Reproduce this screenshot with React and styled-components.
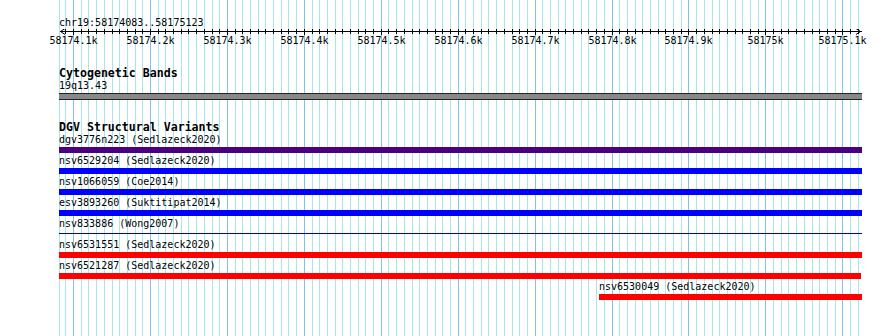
import React from "react";
import styled, { createGlobalStyle } from "styled-components";

const VIEW_START = 58174083;
const VIEW_END = 58175123;
const ORIGIN = 60;
const PX_PER_BP = 800 / (VIEW_END - VIEW_START);
const bpToX = (bp) => ORIGIN + (bp - VIEW_START) * PX_PER_BP;

const GlobalStyle = createGlobalStyle`
  html, body {
    margin: 0;
    padding: 0;
    background: #fff;
  }
  body {
    font-family: "DejaVu Sans Mono", "Liberation Mono", monospace;
    color: #000;
  }
`;

const Browser = styled.div`
  position: relative;
  width: 890px;
  height: 336px;
  overflow: hidden;
  background: #fff;
`;

const GridLayer = styled.svg`
  position: absolute;
  left: 0;
  top: 0;
  z-index: 0;
`;

const Content = styled.div`
  position: relative;
  z-index: 1;
`;

const Location = styled.div`
  padding: 17px 0 0 59px;
  font-size: 10px;
  line-height: 12px;
  height: 12px;
`;

const RulerSvg = styled.svg`
  display: block;
  text {
    font-family: "DejaVu Sans Mono", "Liberation Mono", monospace;
    font-size: 10px;
  }
`;

const Track = styled.section`
  padding-left: 59px;
  margin-top: ${(p) => p.$top}px;
`;

const TrackTitle = styled.div`
  font-size: 11.6px;
  font-weight: bold;
  line-height: 13px;
  height: 13px;
  white-space: pre;
`;

const Label = styled.div`
  font-size: 10px;
  line-height: 12px;
  height: 12px;
  white-space: pre;
`;

const BandBar = styled.div`
  margin-top: 1px;
  width: 803px;
  height: 5px;
  background: #888;
  border-top: 1px solid #222;
  border-bottom: 1px solid #222;
`;

const Feature = styled.div`
  display: flex;
  flex-direction: column;
`;

const Bar = styled.div`
  height: ${(p) => (p.$thin ? 1 : 6)}px;
  margin: ${(p) => (p.$thin ? "3px 0 5px" : "1px 0 2px")};
  background: ${(p) => p.$color};
`;

function ticks() {
  const list = [];
  for (let bp = 58174090; bp <= 58175120; bp += 10) {
    list.push({ bp, x: Math.round(bpToX(bp)), major: bp % 100 === 0 });
  }
  return list;
}

function Grid() {
  const t = ticks();
  return (
    <GridLayer width="890" height="336" shapeRendering="crispEdges">
      <rect x="59" y="0" width="1" height="336" fill="#a8e6ee" />
      {t.map((k) => (
        <rect
          key={k.bp}
          x={k.x}
          y="0"
          width="1"
          height="336"
          fill={k.major ? "#7fc3ea" : "#a8e6ee"}
        />
      ))}
    </GridLayer>
  );
}

function Ruler() {
  const t = ticks();
  return (
    <RulerSvg width="890" height="20">
      <g shapeRendering="crispEdges" fill="#000">
        <rect x="60" y="2" width="802" height="1" />
        {t.map((k) => (
          <rect
            key={k.bp}
            x={k.x}
            y={k.major ? -1 : 0}
            width="1"
            height={k.major ? 7 : 5}
          />
        ))}
      </g>
      <polyline points="65,-0.5 60.5,2.5 65,5.5" fill="none" stroke="#000" strokeWidth="1" />
      <polyline points="856,-0.5 860.5,2.5 856,5.5" fill="none" stroke="#000" strokeWidth="1" />
      {t
        .filter((k) => k.major)
        .map((k) => (
          <text key={k.bp} x={k.x + 0.5} y="14.5" textAnchor="middle">
            {k.bp === 58175000 ? "58175k" : (k.bp / 1000).toFixed(1) + "k"}
          </text>
        ))}
    </RulerSvg>
  );
}

const variants = [
  { name: "dgv3776n223 (Sedlazeck2020)", start: 58170000, end: 58180000, color: "#4b0082" },
  { name: "nsv6529204 (Sedlazeck2020)", start: 58170000, end: 58180000, color: "#0000ff" },
  { name: "nsv1066059 (Coe2014)", start: 58170000, end: 58180000, color: "#0000ff" },
  { name: "esv3893260 (Suktitipat2014)", start: 58170000, end: 58180000, color: "#0000ff" },
  { name: "nsv833886 (Wong2007)", start: 58170000, end: 58180000, color: "#0000b4", thin: true },
  { name: "nsv6531551 (Sedlazeck2020)", start: 58170000, end: 58180000, color: "#ff0000" },
  { name: "nsv6521287 (Sedlazeck2020)", start: 58170000, end: 58175124, color: "#ff0000" },
  { name: "nsv6530049 (Sedlazeck2020)", start: 58174784, end: 58180000, color: "#ff0000" },
];

function FeatureRow({ f }) {
  const left = Math.max(59, Math.round(bpToX(f.start)));
  const right = Math.min(862, Math.round(bpToX(f.end)));
  return (
    <Feature style={{ marginLeft: left - 59 }}>
      <Label>{f.name}</Label>
      <Bar $color={f.color} $thin={f.thin} style={{ width: right - left }} />
    </Feature>
  );
}

export default function App() {
  return (
    <>
      <GlobalStyle />
      <Browser>
        <Grid />
        <Content>
          <Location>chr19:58174083..58175123</Location>
          <Ruler />
          <Track $top={18}>
            <TrackTitle>Cytogenetic Bands</TrackTitle>
            <Label>19q13.43</Label>
            <BandBar />
          </Track>
          <Track $top={21}>
            <TrackTitle>DGV Structural Variants</TrackTitle>
            {variants.map((f) => (
              <FeatureRow key={f.name} f={f} />
            ))}
          </Track>
        </Content>
      </Browser>
    </>
  );
}
